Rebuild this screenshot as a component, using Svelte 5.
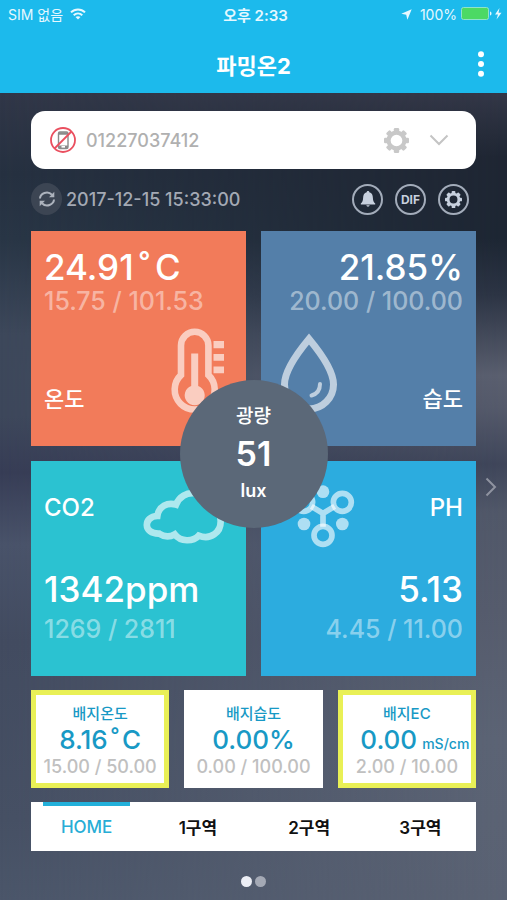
<script>
  const slots = ['01227037412'];
  let device = $state(slots[0]);

  const substrate = [
    { name: '배지온도', value: '8.16', degree: true, range: '15.00 / 50.00', alert: true },
    { name: '배지습도', value: '0.00%', range: '0.00 / 100.00', alert: false },
    { name: '배지EC', value: '0.00', unit: 'mS/cm', range: '2.00 / 10.00', alert: true }
  ];

  const tabs = ['HOME', '1구역', '2구역', '3구역'];
  let active = $state('HOME');

  const teeth = [0, 45, 90, 135, 180, 225, 270, 315];
</script>

{#snippet gear(size)}
  <svg width={size} height={size} viewBox="0 0 24 24" aria-hidden="true">
    <circle cx="12" cy="12" r="7.6" fill="none" stroke="currentColor" stroke-width="4" />
    {#each teeth as angle}
      <rect x="9.4" y="0" width="5.2" height="4.5" rx="1.2" fill="currentColor" transform="rotate({angle} 12 12)" />
    {/each}
  </svg>
{/snippet}

<div class="app">
  <header>
    <div class="status">
      <div class="side">
        <span>SIM 없음</span>
        <svg width="16" height="12" viewBox="0 0 16 12" aria-hidden="true">
          <g fill="none" stroke="currentColor" stroke-width="2">
            <path d="M1 4.4C5 .4 11 .4 15 4.4" />
            <path d="M3.7 7.2c2.5-2.4 6.100-2.4 8.600 0" />
          </g>
          <path d="M8 11.600 5.500 9.100c1.400-1.300 3.600-1.300 5 0z" fill="currentColor" />
        </svg>
      </div>
      <time>오후 2:33</time>
      <div class="side end">
        <svg class="arrow" width="11" height="11" viewBox="0 0 11 11" aria-hidden="true">
          <path d="M10.700.3 6.400 10.700 5.200 5.800.3 4.800z" fill="currentColor" />
        </svg>
        <span>100%</span>
        <svg width="42" height="14" viewBox="0 0 42 14" aria-hidden="true">
          <rect x=".5" y=".5" width="27" height="12" rx="2" fill="#4cd964" stroke="#8fe3c9" />
          <path d="M29 4.500c2 .4 2 3.600 0 4z" fill="currentColor" />
          <path d="M38.500 1 34 7.500h3L35.500 12.500 40.500 5.800h-3z" fill="currentColor" />
        </svg>
      </div>
    </div>
    <div class="bar">
      <h1>파밍온2</h1>
      <button class="more" aria-label="메뉴">
        <svg width="8" height="26" viewBox="0 0 8 26" fill="currentColor" aria-hidden="true">
          <circle cx="4" cy="3.200" r="3" /><circle cx="4" cy="13" r="3" /><circle cx="4" cy="22.800" r="3" />
        </svg>
      </button>
    </div>
  </header>

  <main>
    <div class="picker">
      <select bind:value={device} aria-label="기기 선택">
        {#each slots as s}<option value={s}>{s}</option>{/each}
      </select>
      <svg class="phone" width="26" height="26" viewBox="0 0 26 26" fill="none" aria-hidden="true">
        <rect x="8.500" y="5" width="9.500" height="16.500" rx="1.500" stroke="#8b8b8b" stroke-width="1.400" />
        <path d="M8.500 6.500h9.500M8.500 19.800h9.500" stroke="#8b8b8b" stroke-width="2.600" />
        <rect x="11.500" y="19" width="3.500" height="1.600" fill="#fff" />
        <circle cx="13" cy="13" r="12" stroke="#ea4f5f" stroke-width="1.800" />
        <path d="M21.500 4.500 4.500 21.500" stroke="#ea4f5f" stroke-width="1.800" />
      </svg>
      <button class="config" aria-label="기기 설정">{@render gear(25)}</button>
      <svg class="chevron" width="20" height="12" viewBox="0 0 20 12" fill="none" aria-hidden="true">
        <path d="M1.500 1.500 10 10l8.500-8.500" stroke="#c4c4c4" stroke-width="2" />
      </svg>
    </div>

    <div class="tools">
      <button class="refresh" aria-label="새로고침">
        <svg width="18" height="18" viewBox="0 0 18 18" fill="none" aria-hidden="true">
          <path d="M2 8.500C2.300 3.500 9.500.2 14 4.800M16 9.500C15.700 14.500 8.500 17.800 4 13.200" stroke="currentColor" stroke-width="2" />
          <path d="M16.300 1.800v5.400H11zM1.700 16.200v-5.400H7z" fill="currentColor" />
        </svg>
      </button>
      <time>2017-12-15 15:33:00</time>
      <button class="round" aria-label="알림">
        <svg width="16" height="18" viewBox="0 0 16 18" fill="currentColor" aria-hidden="true">
          <path d="M8 1c.8 0 1.300.5 1.300 1.300C12 3 12.800 5.200 12.900 8c.1 2.800.7 4.300 2.300 5.500v1H.8v-1C2.400 12.300 3 10.800 3.100 8 3.200 5.200 4 3 6.700 2.300 6.700 1.500 7.200 1 8 1zM6.300 15.300h3.400c-.3 1.800-3.100 1.800-3.400 0z" />
        </svg>
      </button>
      <button class="round">DIF</button>
      <button class="round" aria-label="설정">{@render gear(17)}</button>
    </div>

    <section class="tiles">
      <article class="tile temp">
        <div>
          <p class="value">24.91<span class="degree">˚</span>C</p>
          <p class="range">15.75 / 101.53</p>
        </div>
        <h2 class="korean">온도</h2>
        <svg class="icon" width="54" height="91" viewBox="0 0 54 91" aria-hidden="true">
          <path d="M10 47V17.500a13.700 13.700 0 0 1 27.400 0V47a20 20 0 1 1-27.400 0z" fill="none" stroke="currentColor" stroke-width="6.600" />
          <path d="M20.200 25.500h7V58a10 10 0 1 1-7 0zM42.500 13H53v7.300H42.500zM42.500 26H53v6.700H42.500zM42.500 38.500H53v6.700H42.500z" fill="currentColor" />
        </svg>
      </article>

      <article class="tile humid right">
        <div>
          <p class="value">21.85%</p>
          <p class="range">20.00 / 100.00</p>
        </div>
        <h2 class="korean">습도</h2>
        <svg class="icon" width="58" height="80" viewBox="0 0 58 80" fill="none" stroke="currentColor" aria-hidden="true">
          <path d="M29 6C19 18 4.500 37 4.500 51.500a24.500 24.500 0 0 0 49 0C53.500 37 39 18 29 6z" stroke-width="7" />
          <path d="M40 51c0 6-3 10-8.500 11.500" stroke-width="4" stroke-linecap="round" />
        </svg>
      </article>

      <article class="tile co2">
        <h2>CO2</h2>
        <div>
          <p class="value">1342ppm</p>
          <p class="range">1269 / 2811</p>
        </div>
        <svg class="icon" width="82" height="57" viewBox="371 110 246 171" fill="none" aria-hidden="true">
          <path d="M414 197C372 198 370 252 420 250C435 260 452 260 466 252C484 276 522 274 538 256C574 270 605 246 604 212C603 185 588 172 570 170C560 120 490 112 470 163C445 155 418 168 414 197Z" stroke="currentColor" stroke-width="20" />
        </svg>
      </article>

      <article class="tile ph right">
        <h2>PH</h2>
        <div>
          <p class="value">5.13</p>
          <p class="range">4.45 / 11.00</p>
        </div>
        <svg class="icon" width="62" height="64" viewBox="129 102 186 192" fill="none" aria-hidden="true">
          <g stroke="currentColor" stroke-width="17">
            <circle cx="277" cy="157" r="27" /><circle cx="161" cy="157" r="27" /><circle cx="219" cy="256" r="27" />
            <path d="M184 169 219 190 254 169M219 188V230" />
          </g>
          <g fill="currentColor">
            <circle cx="219" cy="125" r="19" /><circle cx="162" cy="222" r="19" /><circle cx="277" cy="222" r="19" />
          </g>
        </svg>
      </article>

      <div class="light">
        <h2>광량</h2>
        <strong>51</strong>
        <span>lux</span>
      </div>
    </section>

    <section class="substrate">
      {#each substrate as item}
        <article class:alert={item.alert}>
          <h3>{item.name}</h3>
          <p class="reading" class:with-unit={item.unit}>
            {item.value}{#if item.degree}<span class="degree">˚</span>C{/if}{#if item.unit}<small>{item.unit}</small>{/if}
          </p>
          <p class="limits">{item.range}</p>
        </article>
      {/each}
    </section>

    <nav>
      {#each tabs as tab}
        <a href="#{tab}" class:active={tab === active} onclick={() => (active = tab)}>{tab}</a>
      {/each}
    </nav>

    <div class="dots"><i class="on"></i><i></i></div>

    <button class="next" aria-label="다음">
      <svg width="12" height="20" viewBox="0 0 12 20" fill="none" aria-hidden="true">
        <path d="M1.500 1.500 10 10l-8.500 8.500" stroke="currentColor" stroke-width="2" />
      </svg>
    </button>
  </main>
</div>

<style>
  :global(body) {
    margin: 0;
  }

  .app {
    min-height: 100vh;
    display: flex;
    flex-direction: column;
    font-family: Inter, 'Noto Sans CJK KR', sans-serif;
    color: #fff;
  }

  h1, h2, h3, p {
    margin: 0;
    font-weight: 500;
  }

  button {
    padding: 0;
    border: 0;
    background: none;
    color: inherit;
    font: inherit;
    display: grid;
    place-items: center;
    cursor: pointer;
  }

  svg {
    display: block;
  }

  header {
    background: #1cbaec;
  }

  .status {
    display: grid;
    grid-template-columns: 1fr auto 1fr;
    align-items: center;
    height: 28px;
    padding: 0 4px 0 8px;
    font-size: 14px;
    color: #e6f8ff;
  }

  .status time {
    font-size: 15px;
    font-weight: 600;
  }

  .side {
    display: flex;
    align-items: center;
    gap: 7px;
  }

  .end {
    justify-content: flex-end;
    gap: 4px;
  }

  .arrow {
    margin-right: 4px;
  }

  .bar {
    display: grid;
    grid-template-columns: 1fr auto 1fr;
    align-items: center;
    height: 65px;
    padding: 7px 22px 0;
    box-sizing: border-box;
  }

  h1 {
    grid-column: 2;
    font-size: 22px;
    font-weight: 700;
  }

  .more {
    justify-self: end;
  }

  main {
    position: relative;
    isolation: isolate;
    flex: 1;
    padding: 18px 31px 13px;
    background: linear-gradient(#313748 0, #263141 10%, #293646 18%, #3d485b 30%, #3d475b 40%, #373d56 47%, #49536a 56%, #424b60 68%, #465064 90%, #4b566a 100%);
  }

  main::before {
    content: '';
    position: absolute;
    inset: 0;
    z-index: -1;
    background: linear-gradient(#333747 0, #1f2633 8%, #1d2633 18%, #2c3444 25%, #5a5f6f 35%, #555a6b 39%, #3f465a 46%, #515869 52%, #565c6d 64%, #5c6475 80%, #5a6273 100%);
    mask-image: linear-gradient(90deg, transparent, #000);
  }

  .picker {
    display: grid;
    grid-template-columns: 19px 26px 1fr 26px 20px 20px 27px;
    align-items: center;
    height: 58px;
    border-radius: 14px;
    background: #fff;
  }

  .picker > * {
    grid-row: 1;
  }

  select {
    grid-column: 1 / -1;
    width: 100%;
    height: 100%;
    padding: 0 0 0 55px;
    border: 0;
    border-radius: 14px;
    appearance: none;
    background: none;
    color: #b0b0b0;
    font: 500 18px Inter, sans-serif;
  }

  .phone {
    grid-column: 2;
    pointer-events: none;
  }

  .config {
    grid-column: 4;
    color: #c8c8c8;
  }

  .chevron {
    grid-column: 6;
    pointer-events: none;
  }

  .tools {
    display: flex;
    align-items: center;
    gap: 12px;
    margin: 14px 7px 16px 0;
    color: #c7d0de;
  }

  .tools time {
    flex: 1;
    margin-left: -8px;
    font-size: 18px;
    font-weight: 500;
    color: #a3a9b4;
  }

  .refresh {
    width: 31px;
    height: 32px;
    border-radius: 50%;
    background: #3c4553;
    color: #adb3bd;
  }

  .round {
    box-sizing: border-box;
    width: 31px;
    height: 31px;
    border: 2px solid #a3acba;
    border-radius: 50%;
    font-size: 12px;
    font-weight: 700;
  }

  .tiles {
    position: relative;
    display: grid;
    grid-template-columns: 1fr 1fr;
    gap: 15px;
  }

  .tile {
    position: relative;
    box-sizing: border-box;
    aspect-ratio: 1;
    display: flex;
    flex-direction: column;
    justify-content: space-between;
    padding: 16px 13px 33px;
  }

  .right {
    text-align: right;
  }

  .temp { background: #f27b5a; }
  .humid { background: #547fa9; }
  .co2 { background: #2bc2d1; }
  .ph { background: #2cacdf; }

  .co2, .ph {
    padding-top: 33px;
  }

  .value {
    font-size: 35px;
    line-height: 40px;
  }

  .degree {
    padding: 0 5px;
  }

  .range {
    font-size: 25px;
    font-weight: 500;
    line-height: 28px;
    color: rgba(255, 255, 255, 0.46);
  }

  .co2 .range, .ph .range {
    margin-top: 6px;
  }

  .tile h2 {
    font-size: 24px;
    line-height: 28px;
  }

  .tile .korean {
    font-size: 22px;
  }

  .icon {
    position: absolute;
    color: rgba(255, 255, 255, 0.62);
  }

  .temp .icon { right: 21px; bottom: 27px; }
  .humid .icon { left: 19px; bottom: 33px; }
  .co2 .icon { right: 21px; top: 26px; }
  .ph .icon { left: 32px; top: 23px; }

  .light {
    position: absolute;
    inset: 0;
    margin: auto;
    box-sizing: border-box;
    width: 148px;
    height: 148px;
    padding-top: 24px;
    border-radius: 50%;
    background: #5b6878;
    display: flex;
    flex-direction: column;
    align-items: center;
  }

  .light h2 {
    font-size: 19px;
    line-height: 26px;
  }

  .light strong {
    font-size: 34px;
    font-weight: 600;
    line-height: 48px;
  }

  .light span {
    font-size: 18px;
    font-weight: 600;
    line-height: 26px;
  }

  .substrate {
    display: grid;
    grid-template-columns: repeat(3, 1fr);
    gap: 15px;
    margin: 14px 0;
  }

  .substrate article {
    box-sizing: border-box;
    min-width: 0;
    height: 98px;
    padding: 9px 0;
    border: 5px solid #fff;
    background: #fff;
    color: #1899c5;
    text-align: center;
    white-space: nowrap;
  }

  .substrate .alert {
    border-color: #e9f056;
  }

  h3 {
    font-size: 15px;
    line-height: 20px;
  }

  .reading {
    font-size: 26px;
    line-height: 32px;
  }

  .reading .degree {
    padding: 0 3px;
  }

  .with-unit {
    padding-left: 16px;
  }

  small {
    margin-left: 5px;
    font-size: 14px;
    line-height: 1;
  }

  .limits {
    font-size: 18px;
    font-weight: 500;
    line-height: 22px;
    color: #c0c0c0;
  }

  nav {
    display: grid;
    grid-template-columns: repeat(4, 1fr);
    height: 49px;
    background: #fff;
  }

  a {
    position: relative;
    display: grid;
    place-items: center;
    color: #111;
    font-size: 17px;
    font-weight: 600;
    text-decoration: none;
  }

  a.active {
    color: #28add6;
    font-weight: 500;
  }

  a.active::before {
    content: '';
    position: absolute;
    inset: 0 12px auto;
    height: 4px;
    background: #22b0da;
  }

  .dots {
    display: flex;
    justify-content: center;
    gap: 3px;
    margin-top: 25px;
  }

  i {
    width: 11px;
    height: 11px;
    border-radius: 50%;
    background: #a4a9b5;
  }

  .on {
    background: #eceef5;
  }

  .next {
    position: absolute;
    right: 10px;
    top: 384px;
    color: #8f93a0;
  }
</style>
